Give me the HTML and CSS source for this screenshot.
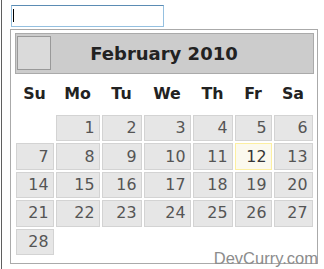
FILE: index.html
```html
<!DOCTYPE html>
<html lang="en">
<head>
  <meta charset="UTF-8">
  <title>Datepicker</title>
  <link rel="stylesheet" href="styles.css">
</head>
<body>
  <div class="frame">
    <div class="field">
      <input type="text" class="date-input">
      <span class="caret"></span>
    </div>

    <div class="datepicker">
      <div class="dp-header">
        <a class="dp-prev"></a>
        <div class="dp-title">February 2010</div>
        <a class="dp-next"></a>
      </div>
      <table class="dp-calendar">
        <colgroup>
          <col class="c-su"><col class="c-mo"><col class="c-tu"><col class="c-we"><col class="c-th"><col class="c-fr"><col class="c-sa">
        </colgroup>
        <thead>
          <tr><th>Su</th><th>Mo</th><th>Tu</th><th>We</th><th>Th</th><th>Fr</th><th>Sa</th></tr>
        </thead>
        <tbody>
          <tr><td></td><td><a>1</a></td><td><a>2</a></td><td><a>3</a></td><td><a>4</a></td><td><a>5</a></td><td><a>6</a></td></tr>
          <tr><td><a>7</a></td><td><a>8</a></td><td><a>9</a></td><td><a>10</a></td><td><a>11</a></td><td><a class="today">12</a></td><td><a>13</a></td></tr>
          <tr><td><a>14</a></td><td><a>15</a></td><td><a>16</a></td><td><a>17</a></td><td><a>18</a></td><td><a>19</a></td><td><a>20</a></td></tr>
          <tr><td><a>21</a></td><td><a>22</a></td><td><a>23</a></td><td><a>24</a></td><td><a>25</a></td><td><a>26</a></td><td><a>27</a></td></tr>
          <tr><td><a>28</a></td><td></td><td></td><td></td><td></td><td></td><td></td></tr>
        </tbody>
      </table>
    </div>

    <div class="watermark">DevCurry.com</div>
  </div>
</body>
</html>
```

FILE: styles.css
```css
body {
  margin: 0;
  background: #fff;
  font-family: "DejaVu Sans", Verdana, sans-serif;
  overflow: hidden;
}
.frame {
  position: relative;
  height: 269px;
  margin-left: 1px;
  border-left: 1px solid #5f5f5f;
  padding: 5px 0 0 9px;
  box-sizing: border-box;
}
.field {
  position: relative;
  width: 153px;
}
.date-input {
  display: block;
  width: 153px;
  height: 22px;
  box-sizing: border-box;
  margin: 0;
  border: 1px solid #95c0e0;
  border-top-color: #5b8cb4;
  outline: none;
  background: #fff;
}
.caret {
  position: absolute;
  left: 2px;
  top: 4px;
  width: 1px;
  height: 13px;
  background: #000;
}
.datepicker {
  width: 299px;
  margin: 2px 0 0 -1px;
  padding: 3px 3.5px 0;
  border: 1px solid #aaa;
  background: #fff;
  color: #222;
  font-size: 17.6px;
}
.dp-header {
  display: flex;
  align-items: flex-start;
  padding: 3.5px 0;
  border: 1px solid #aaa;
  background: #ccc;
  color: #222;
  font-weight: bold;
}
.dp-prev, .dp-next {
  flex: none;
  width: 32px;
  height: 32px;
  margin: -2px 1px 0;
  border: 1px solid #999;
  background: #dadada;
}
.dp-next {
  visibility: hidden;
}
.dp-title {
  flex: 1;
  text-align: center;
  font-size: 18px;
  line-height: 31.7px;
}
.dp-calendar {
  width: 100%;
  table-layout: fixed;
  border-collapse: collapse;
  margin: 0 0 7px;
  font-size: 15.84px;
}
.c-su { width: 40px; }
.c-mo { width: 46px; }
.c-tu { width: 42px; }
.c-we { width: 49px; }
.c-th { width: 42px; }
.c-fr { width: 39px; }
.c-sa { width: 41px; }
.dp-calendar th {
  padding: 11px 0;
  line-height: 18px;
  font-weight: bold;
  text-align: center;
}
.dp-calendar td {
  padding: 1px;
}
.dp-calendar td a {
  display: block;
  padding: 3.2px 4px 3.2px 3.2px;
  line-height: 18px;
  text-align: right;
  border: 1px solid #d3d3d3;
  background: #e6e6e6;
  color: #555;
}
.dp-calendar td a.today {
  border-color: #fcefa1;
  background: #fbf9ee;
  color: #363636;
}
.watermark {
  position: absolute;
  right: 6px;
  top: 249px;
  font-family: "Liberation Sans", Arial, sans-serif;
  font-size: 16.5px;
  color: #8c8c8c;
}
```
